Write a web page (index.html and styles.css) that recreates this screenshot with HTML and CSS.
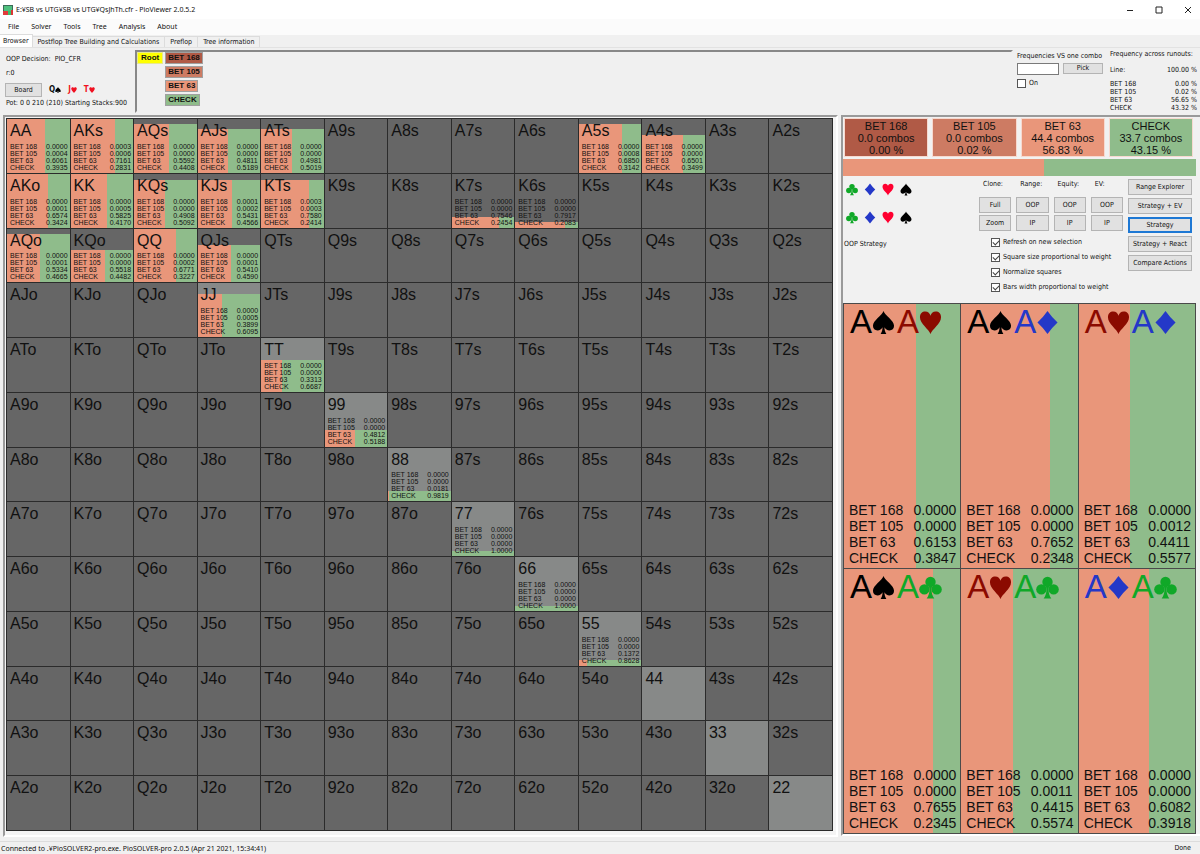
FILE: index.html
```html
<!DOCTYPE html>
<html lang="en">
<head>
<meta charset="utf-8">
<title>PioViewer 2.0.5.2</title>
<link rel="stylesheet" href="styles.css">
</head>
<body>
<svg class="symbols" aria-hidden="true">
  <symbol id="club" viewBox="0 0 24 24"><circle cx="12" cy="6.2" r="5.4"/><circle cx="5.6" cy="14" r="5.4"/><circle cx="18.4" cy="14" r="5.4"/><path d="M10 9h4l-1 5c.2 4 1.200 7 3 9.500H8c1.800-2.500 2.800-5.500 3-9.500z"/></symbol>
  <symbol id="diamond" viewBox="0 0 24 24"><path d="M12 0Q16.500 6.500 22.500 12Q16.500 17.500 12 24Q7.500 17.500 1.500 12Q7.500 6.500 12 0z"/></symbol>
  <symbol id="heart" viewBox="0 0 24 24"><path d="M12 24C10.500 19 1 13.500 1 6.500C1 2.500 3.500.5 6.500.5C9.500.5 11.500 2.500 12 5C12.500 2.500 14.500.5 17.500.5C20.500.5 23 2.500 23 6.500C23 13.500 13.500 19 12 24z"/></symbol>
  <symbol id="spade" viewBox="0 0 24 24"><path d="M12 0C13.500 5 23 9.500 23 15.500C23 18.500 21 20.300 18.300 20.300C15.800 20.300 14 19 13 17C13 20 13.800 22 15 24H9C10.200 22 11 20 11 17C10 19 8.200 20.300 5.700 20.300C3 20.300 1 18.500 1 15.500C1 9.500 10.500 5 12 0z"/></symbol>
</svg>

<header class="titlebar">
  <svg class="app-icon" viewBox="0 0 10 10" aria-hidden="true"><path fill="#3d6b58" d="M0 0h10v10H0z"/><path fill="#4fc07e" d="M1 1h8v5H1z"/><path fill="#e23b3b" d="M0 6h5v4H0z"/><path fill="#3cc06c" d="M5 6h3v4H5z"/><path fill="#d93636" d="M8 5h2v5H8z"/></svg>
  <h1 class="title">E:¥SB vs UTG¥SB vs UTG¥QsJhTh.cfr - PioViewer 2.0.5.2</h1>
  <div class="window-buttons">
    <button type="button" aria-label="Minimize"><svg viewBox="0 0 8 8"><path d="M1 4.500h6"/></svg></button>
    <button type="button" aria-label="Maximize"><svg viewBox="0 0 8 8"><path d="M1 1h6v6H1z"/></svg></button>
    <button type="button" aria-label="Close"><svg viewBox="0 0 8 8"><path d="M1 1l6 6M7 1l-6 6"/></svg></button>
  </div>
</header>

<nav class="menubar">
  <button type="button">File</button>
  <button type="button">Solver</button>
  <button type="button">Tools</button>
  <button type="button">Tree</button>
  <button type="button">Analysis</button>
  <button type="button">About</button>
</nav>

<div class="tabs" role="tablist">
  <button type="button" role="tab" aria-selected="true">Browser</button>
  <button type="button" role="tab" aria-selected="false">Postflop Tree Building and Calculations</button>
  <button type="button" role="tab" aria-selected="false">Preflop</button>
  <button type="button" role="tab" aria-selected="false">Tree information</button>
</div>

<section class="top">
  <div class="decision">
    <p>OOP Decision:&nbsp; PIO_CFR</p>
    <p>r:0</p>
    <div class="board">
      <button type="button" class="btn">Board</button>
      <span class="card">Q<svg><use href="#spade"/></svg></span>
      <span class="card red">J<svg><use href="#heart"/></svg></span>
      <span class="card red">T<svg><use href="#heart"/></svg></span>
    </div>
    <p>Pot: 0 0 210 (210) Starting Stacks:900</p>
  </div>
  <div class="tree sunken">
    <button type="button" class="node root">Root</button>
    <div class="children">
      <button type="button" class="node bet168">BET 168</button>
      <button type="button" class="node bet105">BET 105</button>
      <button type="button" class="node bet63">BET 63</button>
      <button type="button" class="node check">CHECK</button>
    </div>
  </div>
  <div class="versus">
    <label for="combo">Frequencies VS one combo</label>
    <div class="pick"><input type="text" id="combo"><button type="button" class="btn">Pick</button></div>
    <label class="tick"><input type="checkbox">On</label>
  </div>
  <table class="runouts">
    <caption>Frequency across runouts:</caption>
    <tr class="line"><th>Line:</th><td>100.00 %</td></tr>
    <tr><th>BET 168</th><td>0.00 %</td></tr>
    <tr><th>BET 105</th><td>0.02 %</td></tr>
    <tr><th>BET 63</th><td>56.65 %</td></tr>
    <tr><th>CHECK</th><td>43.32 %</td></tr>
  </table>
</section>

<main class="main">
  <section class="matrix-panel sunken"><div class="matrix" id="matrix"></div></section>
  <section class="side sunken">
    <div class="actions">
      <button type="button" class="bet168">BET 168<br>0.0 combos<br>0.00 %</button>
      <button type="button" class="bet105">BET 105<br>0.0 combos<br>0.02 %</button>
      <button type="button" class="bet63">BET 63<br>44.4 combos<br>56.83 %</button>
      <button type="button" class="check">CHECK<br>33.7 combos<br>43.15 %</button>
    </div>
    <div class="bar"><div class="bet63" style="width:56.83%"></div></div>
    <div class="controls">
      <div class="filters">
        <div class="suits"><svg class="c"><use href="#club"/></svg><svg class="d"><use href="#diamond"/></svg><svg class="h"><use href="#heart"/></svg><svg class="s"><use href="#spade"/></svg></div>
        <div class="suits"><svg class="c"><use href="#club"/></svg><svg class="d"><use href="#diamond"/></svg><svg class="h"><use href="#heart"/></svg><svg class="s"><use href="#spade"/></svg></div>
        <p>OOP Strategy</p>
      </div>
      <div class="middle">
        <div class="views">
          <span>Clone:</span><span>Range:</span><span>Equity:</span><span>EV:</span>
          <button type="button" class="btn">Full</button><button type="button" class="btn">OOP</button><button type="button" class="btn">OOP</button><button type="button" class="btn">OOP</button>
          <button type="button" class="btn">Zoom</button><button type="button" class="btn">IP</button><button type="button" class="btn">IP</button><button type="button" class="btn">IP</button>
        </div>
        <div class="options">
          <label class="tick"><input type="checkbox" checked>Refresh on new selection</label>
          <label class="tick"><input type="checkbox" checked>Square size proportional to weight</label>
          <label class="tick"><input type="checkbox" checked>Normalize squares</label>
          <label class="tick"><input type="checkbox" checked>Bars width proportional to weight</label>
        </div>
      </div>
      <div class="modes">
        <button type="button" class="btn">Range Explorer</button>
        <button type="button" class="btn">Strategy + EV</button>
        <button type="button" class="btn selected">Strategy</button>
        <button type="button" class="btn">Strategy + React</button>
        <button type="button" class="btn">Compare Actions</button>
      </div>
    </div>
    <div class="combos" id="combos"></div>
  </section>
</main>

<footer class="status"><span>Connected to .¥PioSOLVER2-pro.exe. PioSOLVER-pro 2.0.5 (Apr 21 2021, 15:34:41)</span><span class="done">Done</span></footer>
<script src="script.js"></script>
</body>
</html>
```
FILE: styles.css
```css
* { box-sizing: border-box; }
body {
  margin: 0; min-height: 100vh; display: flex; flex-direction: column;
  background: #f0f0f0; color: #111;
  font: 7px/10px "DejaVu Sans Condensed", "Liberation Sans", sans-serif;
}
p, h1 { margin: 0; }
button { font: inherit; color: inherit; border: 0; padding: 0; background: none; white-space: nowrap; }
.symbols { position: absolute; width: 0; height: 0; }

.bet168 { background: #b05a46; }
.bet105 { background: #cd7b63; }
.bet63 { background: #e9967a; }
.check { background: #8fbc8b; }
.sunken { border: 2px solid; border-color: #9a9a9a #fff #fff #9a9a9a; }
.btn { height: 16px; border: 1px solid #b4b4b4; background: #e1e1e1; }
.btn.selected { border: 2px solid #1e78d4; }

.titlebar { display: flex; align-items: center; height: 19px; padding-left: 3px; gap: 3px; background: #fff; }
.app-icon { width: 10px; height: 10px; }
.title { flex: 1; font: 7px/10px "Noto Sans", sans-serif; }
.window-buttons { display: flex; gap: 21px; padding-right: 8px; }
.window-buttons button { display: flex; }
.window-buttons svg { width: 8px; height: 8px; fill: none; stroke: #222; }

.menubar { display: flex; align-items: center; gap: 12px; height: 16px; padding-left: 8px; background: #fbfbfb; font: 7px/10px "Noto Sans", sans-serif; }
.tabs { display: flex; align-items: flex-end; height: 13px; border-bottom: 1px solid #e2e2e2; }
.tabs button { height: 11px; padding: 0 5px; border: 1px solid #dcdcdc; border-width: 1px 1px 0 0; }
.tabs [aria-selected="true"] { height: 13px; padding: 0 3px; background: #fff; }

.top { display: flex; height: 67px; }
.decision { width: 135px; padding: 6px 0 0 6px; white-space: nowrap; }
.decision p { height: 14px; }
.board { display: flex; align-items: center; gap: 7px; height: 16px; }
.board .btn { width: 37px; height: 14px; margin: 0 0 0 -1px; }
.card { display: flex; align-items: center; font-size: 8px; font-weight: bold; }
.card svg { width: 6px; height: 6px; }
.red { color: #f01020; fill: #f01020; }
.tree { flex: 1; display: flex; align-items: flex-start; gap: 2px; margin: 2px 0; border-color: #888 #f0f0f0 #f0f0f0 #888; }
.node { height: 12px; padding: 0 2px; border: 1px solid #a0a0a0; font: bold 8px/10px "Liberation Sans", sans-serif; }
.root { padding: 0 3px; background: #ff0; border-color: #e8e890; }
.children { display: flex; flex-direction: column; align-items: flex-start; gap: 2px; }
.versus { width: 97px; padding: 3px 0 0 4px; white-space: nowrap; }
.pick { display: flex; gap: 4px; margin-top: 2px; }
.pick input { width: 42px; height: 12px; border: 1px solid #7a7a7a; background: #fff; }
.pick .btn { width: 40px; height: 11px; line-height: 9px; }
.versus .tick { margin-top: 3px; }
.tick { display: flex; align-items: center; gap: 3px; }
.tick input {
  appearance: none; width: 9px; height: 9px; margin: 0; border: 1px solid #555; background: #fff;
}
.tick input:checked::before {
  content: ""; display: block; width: 5px; height: 3px; margin: 1px; border: solid #444; border-width: 0 0 1px 1px; transform: rotate(-45deg);
}
.runouts { align-self: flex-start; width: 90px; border-spacing: 0; margin-top: 1px; padding-right: 3px; white-space: nowrap; }
.runouts caption { text-align: left; }
.runouts th { padding: 0; font-weight: normal; text-align: left; line-height: 8px; }
.runouts td { padding: 0; text-align: right; line-height: 8px; }
.runouts .line > * { height: 21px; }

.main { flex: 1; display: grid; grid-template-columns: minmax(0, 1fr) 359px; gap: 3px; padding-left: 3px; }
.matrix-panel { display: grid; margin-bottom: 4px; padding: 1px 3px 4px 1px; font-family: "Liberation Sans", sans-serif; background: #f4f4f4; }
.matrix { display: grid; grid-template-columns: repeat(13, minmax(0, 1fr)); grid-template-rows: repeat(13, minmax(0, 1fr)); border: solid #2b2b2b; border-width: 1px 0 0 1px; }
.cell { position: relative; display: flex; flex-direction: column; justify-content: space-between; padding: 4px 2px 2px 3px; border: solid #2b2b2b; border-width: 0 1px 1px 0; background: #666; }
.cell.pair { background: #878988; }
.cell b { position: relative; font: 16px/16px "Liberation Sans", sans-serif; }
.fill { position: absolute; left: 0; right: 0; bottom: 0; display: flex; background: #8fbc8b; }
.stats { position: relative; display: grid; grid-template-columns: 1fr auto; margin: 0; font-size: 7px; line-height: 7px; white-space: nowrap; }
.stats dd { margin: 0; }

.side { display: flex; flex-direction: column; margin-bottom: 5px; border-right: 0; padding-right: 4px; background: #f1f1f1; }
.actions { display: grid; grid-template-columns: repeat(4, 1fr); gap: 4px; padding: 1px 3px 2px 1px; }
.actions button { height: 39px; border: 1px solid #f7d9cf; font: 11px/12px "Liberation Sans", sans-serif; }
.bar { display: flex; height: 17px; background: #8fbc8b; }
.controls { display: grid; grid-template-columns: 1fr 144px 64px; gap: 5px; height: 127px; padding: 3px 4px 0 0; }
.filters { padding: 4px 0 0 3px; }
.suits { display: flex; gap: 6px; height: 28px; }
.suits svg { width: 12px; height: 13px; }
.c { fill: #10a828; color: #10a828; }
.d { fill: #2438c8; color: #2438c8; }
.h { fill: #ff0030; color: #ff0030; }
.s { fill: #000; color: #000; }
.filters p { margin: 0 0 0 -2px; }
.views { display: grid; grid-template-columns: repeat(4, 1fr); gap: 2px 5px; }
.views span { height: 16px; padding-left: 4px; }
.options { display: grid; gap: 5px; padding: 6px 0 0 12px; white-space: nowrap; }
.options .tick { height: 10px; }
.modes { display: grid; align-content: start; gap: 3px; }
.combos { flex: 1; display: grid; grid-template-columns: repeat(3, minmax(0, 1fr)); grid-template-rows: 1fr 1fr; border: solid #4a4a4a; border-width: 1px 0 0 1px; font-family: "Liberation Sans", sans-serif; }
.combo { position: relative; display: flex; flex-direction: column; justify-content: space-between; padding: 2px 4px 2px 5px; border: solid #4a4a4a; border-width: 0 1px 1px 0; }
.combo .stats { font-size: 14px; line-height: 16px; }
.hand { position: relative; display: flex; align-items: center; gap: 2px; padding-left: 1px; font-size: 33px; line-height: 32px; }
.hand span { display: flex; align-items: center; }
.hand svg { width: 23px; height: 25px; }
.hand .h { fill: #8b0a00; color: #8b0a00; }

.status { display: flex; justify-content: space-between; height: 13px; padding: 1px 9px 0 1px; border-top: 1px solid #dcdcdc; font: 7px/12px "Noto Sans", sans-serif; }
.done { font: 7px/10px "DejaVu Sans Condensed", "Liberation Sans", sans-serif; }
```
FILE: script.js
```js
const ranks = 'AKQJT98765432';
const actions = ['BET 168', 'BET 105', 'BET 63', 'CHECK'];

// hand: [weight %, frequency of each action]
const hands = {
  AA: [100, '0.0000', '0.0004', '0.6061', '0.3935'],
  AKs: [100, '0.0003', '0.0006', '0.7161', '0.2831'],
  AQs: [90, '0.0000', '0.0000', '0.5592', '0.4408'],
  AJs: [81, '0.0000', '0.0000', '0.4811', '0.5189'],
  ATs: [81, '0.0000', '0.0000', '0.4981', '0.5019'],
  A5s: [90, '0.0000', '0.0008', '0.6850', '0.3142'],
  A4s: [70, '0.0000', '0.0000', '0.6501', '0.3499'],
  AKo: [100, '0.0000', '0.0001', '0.6574', '0.3424'],
  KK: [100, '0.0000', '0.0005', '0.5825', '0.4170'],
  KQs: [89, '0.0000', '0.0000', '0.4908', '0.5092'],
  KJs: [89, '0.0001', '0.0002', '0.5431', '0.4566'],
  KTs: [89, '0.0003', '0.0003', '0.7580', '0.2414'],
  K7s: [20, '0.0000', '0.0000', '0.7546', '0.2454'],
  K6s: [10, '0.0000', '0.0000', '0.7917', '0.2083'],
  AQo: [90, '0.0000', '0.0001', '0.5334', '0.4665'],
  KQo: [61, '0.0000', '0.0000', '0.5518', '0.4482'],
  QQ: [100, '0.0000', '0.0002', '0.6771', '0.3227'],
  QJs: [70, '0.0000', '0.0001', '0.5410', '0.4590'],
  JJ: [80, '0.0000', '0.0005', '0.3899', '0.6095'],
  TT: [60, '0.0000', '0.0000', '0.3313', '0.6687'],
  99: [30, '0.0000', '0.0000', '0.4812', '0.5188'],
  88: [19, '0.0000', '0.0000', '0.0181', '0.9819'],
  77: [10, '0.0000', '0.0000', '0.0000', '1.0000'],
  66: [10, '0.0000', '0.0000', '0.0000', '1.0000'],
  55: [10, '0.0000', '0.0000', '0.1372', '0.8628']
};

const combos = [
  ['s', 'h', '0.0000', '0.0000', '0.6153', '0.3847'],
  ['s', 'd', '0.0000', '0.0000', '0.7652', '0.2348'],
  ['h', 'd', '0.0000', '0.0012', '0.4411', '0.5577'],
  ['s', 'c', '0.0000', '0.0000', '0.7655', '0.2345'],
  ['h', 'c', '0.0000', '0.0011', '0.4415', '0.5574'],
  ['d', 'c', '0.0000', '0.0000', '0.6082', '0.3918']
];
const suitNames = { c: 'club', d: 'diamond', h: 'heart', s: 'spade' };

const fill = (weight, freqs) =>
  `<div class="fill" style="height:${weight}%"><div class="bet63" style="width:${freqs[2] * 100}%"></div></div>`;
const stats = freqs =>
  `<dl class="stats">${freqs.map((f, i) => `<dt>${actions[i]}</dt><dd>${f}</dd>`).join('')}</dl>`;

let cells = '';
for (let r = 0; r < 13; r++) {
  for (let c = 0; c < 13; c++) {
    const name = r === c ? ranks[r] + ranks[r]
      : c > r ? ranks[r] + ranks[c] + 's' : ranks[c] + ranks[r] + 'o';
    const [weight, ...freqs] = hands[name] || [];
    cells += `<div class="cell${r === c ? ' pair' : ''}">${weight ? fill(weight, freqs) : ''}<b>${name}</b>${weight ? stats(freqs) : ''}</div>`;
  }
}
document.getElementById('matrix').innerHTML = cells;

const card = suit => `<span class="${suit}">A<svg><use href="#${suitNames[suit]}"/></svg></span>`;
document.getElementById('combos').innerHTML = combos.map(([a, b, ...freqs]) =>
  `<div class="combo">${fill(100, freqs)}<div class="hand">${card(a)}${card(b)}</div>${stats(freqs)}</div>`).join('');
```
